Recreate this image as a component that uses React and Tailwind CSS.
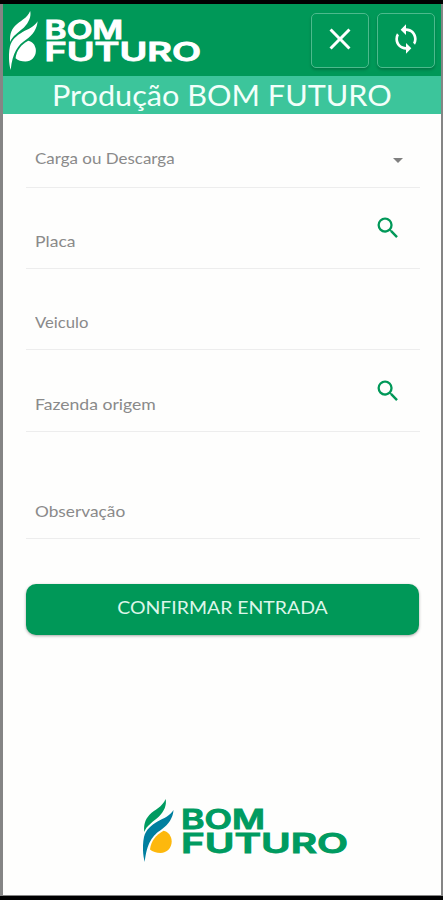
import React from 'react';
import { MdArrowDropDown, MdClose, MdLoop, MdSearch } from 'react-icons/md';

const fields = [
  { label: 'Carga ou Descarga', row: 'h-[74px] pb-[19px]', text: 'scale-x-[1.06]', select: true },
  { label: 'Placa', row: 'h-[81px] pb-[17px]', text: 'scale-x-[1.1]', search: true },
  { label: 'Veiculo', row: 'h-[81px] pb-[17px]', text: 'scale-x-[1.04]' },
  { label: 'Fazenda origem', row: 'h-[82px] pb-[17px]', text: 'scale-x-[1.1]', search: true },
  { label: 'Observação', row: 'h-[107px] pb-[17px]', text: 'scale-x-[1.08]' },
];

function Logo({ className, leaf, stem, seed, word }) {
  return (
    <svg viewBox="0 0 205 63" className={className} role="img" aria-label="Bom Futuro">
      <path
        className={leaf}
        d="M22.6 0C24 6 21 12.5 16 17.5C10 23 3.5 26.5 1.3 33C0.6 26.5 1.8 21 6.3 16C11.5 10.5 19.5 8 22.6 0Z"
      />
      <path
        className={stem}
        d="M30.5 11C30 19 25.5 25.5 18.5 30.5C9.5 36.5 3.8 44 1.8 63C-0.4 56 -0.6 45 1 38C3 30.5 8 26.5 14.5 22.5C21 19 27 17 30.5 11Z"
      />
      <path
        className={seed}
        d="M20.5 31.7C25.5 32.5 28.7 37.5 28.7 42.5C28.7 49 23.8 54 17.5 54C13.3 54 9.5 52.8 7 50.5C8 41.5 13 36 20.5 31.7Z"
      />
      <text
        className={word}
        fontFamily="Inter, sans-serif"
        fontWeight="600"
        fontSize="27"
        strokeWidth="0.9"
      >
        <tspan x="38" y="30.3" textLength="84" lengthAdjust="spacingAndGlyphs">BOM</tspan>
        <tspan x="38" y="53.5" textLength="167" lengthAdjust="spacingAndGlyphs">FUTURO</tspan>
      </text>
    </svg>
  );
}

function HeaderButton({ label, children }) {
  return (
    <button
      aria-label={label}
      className="flex h-[55px] w-[58px] items-center justify-center rounded-[5px] border border-[#4dba8d] pb-[3px] text-white shadow-[0_2px_3px_rgba(0,0,0,0.2)]"
    >
      {children}
    </button>
  );
}

export default function App() {
  return (
    <div className="flex h-[900px] w-[443px] flex-col border-t-4 border-b-4 border-black bg-[#fefefd] font-['Lato',sans-serif]">
      <div className="flex flex-1 flex-col border-r-2 border-b border-l-3 border-[#858585]">
        {/* Header */}
        <header className="flex h-[72px] items-start justify-between bg-[#009858] pt-[7px] pr-[6px] pl-[6px]">
          <Logo
            className="h-[59px] w-[192px]"
            leaf="fill-white"
            stem="fill-white"
            seed="fill-white"
            word="fill-white stroke-white"
          />
          <div className="flex gap-2 pt-[2px]">
            <HeaderButton label="Fechar">
              <MdClose className="size-[36px]" />
            </HeaderButton>
            <HeaderButton label="Atualizar">
              <MdLoop className="size-[32px]" />
            </HeaderButton>
          </div>
        </header>

        <h1 className="flex h-[38px] items-center justify-center bg-[#3cc59b] pb-[2px] text-[29px] leading-none whitespace-nowrap text-[#f2fffa]">
          <span className="scale-x-[1.056]">Produção BOM FUTURO</span>
        </h1>

        {/* Form */}
        <main className="flex flex-col pr-[21px] pl-[23px]">
          {fields.map((field) => (
            <div
              key={field.label}
              className={`flex items-end justify-between border-b border-[#ededed] pr-[10px] pl-[9px] ${field.row}`}
            >
              <label className={`origin-left text-base leading-5 text-[#8a8a8a] ${field.text}`}>{field.label}</label>
              {field.select && <MdArrowDropDown className="mb-[-4px] size-[24px] text-[#808080]" />}
              {field.search && <MdSearch className="mr-[8px] mb-[9px] size-[28px] text-[#009858]" />}
            </div>
          ))}

          <button className="mt-[45px] mr-px flex h-[51px] items-center justify-center rounded-[10px] bg-[#009858] pb-[5px] text-lg text-[#dcf6e9] shadow-[0_1px_3px_rgba(0,0,0,0.35)]">
            <span className="scale-x-[1.08]">CONFIRMAR ENTRADA</span>
          </button>
        </main>

        {/* Footer logo */}
        <footer className="mt-auto pb-[33px] pl-[140px]">
          <Logo
            className="h-[63px] w-[205px]"
            leaf="fill-[#009b60]"
            stem="fill-[#007f9f]"
            seed="fill-[#fdb80d]"
            word="fill-[#009b60] stroke-[#009b60]"
          />
        </footer>
      </div>
    </div>
  );
}
